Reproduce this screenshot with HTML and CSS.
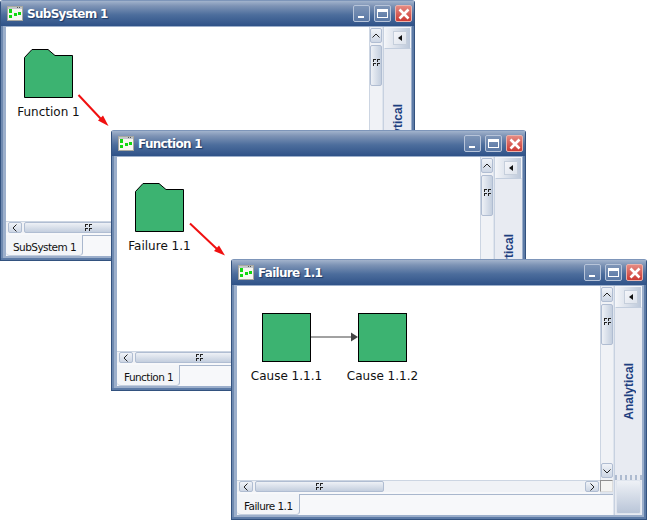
FILE: index.html
```html
<!DOCTYPE html>
<html lang="en">
<head>
<meta charset="utf-8">
<title>Nested diagrams</title>
<link rel="stylesheet" href="styles.css">
</head>
<body>
<svg width="0" height="0" class="defs" aria-hidden="true">
  <symbol id="app" viewBox="0 0 16 16">
    <rect x="0.5" y="0.5" width="15" height="14" fill="#f6f6f0" stroke="#a8a8a0"/>
    <rect x="1" y="1" width="14" height="2" fill="#c4c8cc"/>
    <rect x="10" y="1" width="1" height="1" fill="#555"/>
    <rect x="12" y="1" width="1" height="1" fill="#555"/>
    <rect x="2" y="3" width="3" height="4" fill="#10d810"/>
    <rect x="2" y="9" width="3" height="3" fill="#10d810"/>
    <rect x="7" y="7" width="3" height="3" fill="#10d810"/>
    <rect x="11" y="6" width="3" height="3" fill="#10d810"/>
  </symbol>
  <symbol id="grip" viewBox="0 0 7 7">
    <path d="M0 0h3v1H1v2H0zM4 0h3v1H5v2H4zM0 4h3v1H1v2H0zM4 4h3v1H5v2H4z" fill="#222"/>
  </symbol>
</svg>

<section class="window win-one">
  <header class="titlebar">
    <svg class="app-icon"><use href="#app"/></svg>
    <span class="title">SubSystem 1</span>
    <div class="controls">
      <button class="ctl"><span class="min-glyph"></span></button>
      <button class="ctl"><span class="max-glyph"></span></button>
      <button class="ctl close"><svg viewBox="0 0 12 12" width="12" height="12"><path d="M1.5 1.5l9 9M10.5 1.5l-9 9" stroke="#fff" stroke-width="2.6"/></svg></button>
    </div>
  </header>
  <div class="body">
    <div class="main">
      <div class="canvas">
        <div class="node node-a"><svg class="shape" viewBox="0 0 49 49"><path d="M.5 8.500L8 .5H24L31 6.500H48.500V48.500H.5Z" fill="#3cb371" stroke="#000"/></svg><span class="label">Function 1</span></div>
      </div>
      <div class="vscroll">
        <div class="sbtn"><svg viewBox="0 0 10 10" width="10" height="10"><path d="M1.500 6.500L5 3l3.500 3.500" fill="none" stroke="#222"/></svg></div>
        <div class="vthumb"><svg class="grip"><use href="#grip"/></svg></div>
      </div>
      <div class="hscroll">
        <div class="sbtn"><svg viewBox="0 0 10 10" width="10" height="10"><path d="M6.500 1.500L3 5l3.500 3.500" fill="none" stroke="#222"/></svg></div>
        <div class="hthumb"><svg class="grip"><use href="#grip"/></svg></div>
        <div class="htrack"></div>
        <div class="sbtn"><svg viewBox="0 0 10 10" width="10" height="10"><path d="M3.500 1.500L7 5 3.500 8.500" fill="none" stroke="#222"/></svg></div>
      </div>
      <div class="corner"></div>
      <div class="tabs"><span class="tab">SubSystem 1</span></div>
    </div>
    <aside class="side">
      <div class="side-head"><div class="side-btn"><svg viewBox="0 0 4 6" width="4" height="6"><path d="M4 0v6L0 3z" fill="#111"/></svg></div></div>
      <div class="side-mid"><span class="vtext">Analytical</span></div>
      <div class="dots"></div>
      <div class="side-foot"></div>
    </aside>
  </div>
</section>

<section class="window win-two">
  <header class="titlebar">
    <svg class="app-icon"><use href="#app"/></svg>
    <span class="title">Function 1</span>
    <div class="controls">
      <button class="ctl"><span class="min-glyph"></span></button>
      <button class="ctl"><span class="max-glyph"></span></button>
      <button class="ctl close"><svg viewBox="0 0 12 12" width="12" height="12"><path d="M1.5 1.5l9 9M10.5 1.5l-9 9" stroke="#fff" stroke-width="2.6"/></svg></button>
    </div>
  </header>
  <div class="body">
    <div class="main">
      <div class="canvas">
        <div class="node node-b"><svg class="shape" viewBox="0 0 49 49"><path d="M.5 8.500L8 .5H24L31 6.500H48.500V48.500H.5Z" fill="#3cb371" stroke="#000"/></svg><span class="label">Failure 1.1</span></div>
      </div>
      <div class="vscroll">
        <div class="sbtn"><svg viewBox="0 0 10 10" width="10" height="10"><path d="M1.500 6.500L5 3l3.500 3.500" fill="none" stroke="#222"/></svg></div>
        <div class="vthumb"><svg class="grip"><use href="#grip"/></svg></div>
      </div>
      <div class="hscroll">
        <div class="sbtn"><svg viewBox="0 0 10 10" width="10" height="10"><path d="M6.500 1.500L3 5l3.500 3.500" fill="none" stroke="#222"/></svg></div>
        <div class="hthumb"><svg class="grip"><use href="#grip"/></svg></div>
        <div class="htrack"></div>
        <div class="sbtn"><svg viewBox="0 0 10 10" width="10" height="10"><path d="M3.500 1.500L7 5 3.500 8.500" fill="none" stroke="#222"/></svg></div>
      </div>
      <div class="corner"></div>
      <div class="tabs"><span class="tab">Function 1</span></div>
    </div>
    <aside class="side">
      <div class="side-head"><div class="side-btn"><svg viewBox="0 0 4 6" width="4" height="6"><path d="M4 0v6L0 3z" fill="#111"/></svg></div></div>
      <div class="side-mid"><span class="vtext">Analytical</span></div>
      <div class="dots"></div>
      <div class="side-foot"></div>
    </aside>
  </div>
</section>

<section class="window win-three">
  <header class="titlebar">
    <svg class="app-icon"><use href="#app"/></svg>
    <span class="title">Failure 1.1</span>
    <div class="controls">
      <button class="ctl"><span class="min-glyph"></span></button>
      <button class="ctl"><span class="max-glyph"></span></button>
      <button class="ctl close"><svg viewBox="0 0 12 12" width="12" height="12"><path d="M1.5 1.5l9 9M10.5 1.5l-9 9" stroke="#fff" stroke-width="2.6"/></svg></button>
    </div>
  </header>
  <div class="body">
    <div class="main">
      <div class="canvas">
        <div class="node node-c"><div class="square"></div><span class="label">Cause 1.1.1</span></div>
        <svg class="link" width="47" height="12" viewBox="0 0 47 12"><path d="M0 6H40" stroke="#444"/><path d="M40 1.500L47 6 40 10.500Z" fill="#444"/></svg>
        <div class="node node-d"><div class="square"></div><span class="label">Cause 1.1.2</span></div>
      </div>
      <div class="vscroll">
        <div class="sbtn"><svg viewBox="0 0 10 10" width="10" height="10"><path d="M1.500 6.500L5 3l3.500 3.500" fill="none" stroke="#222"/></svg></div>
        <div class="vthumb"><svg class="grip"><use href="#grip"/></svg></div>
        <div class="vtrack"></div>
        <div class="sbtn"><svg viewBox="0 0 10 10" width="10" height="10"><path d="M1.500 3.500L5 7l3.500-3.500" fill="none" stroke="#222"/></svg></div>
      </div>
      <div class="hscroll">
        <div class="sbtn"><svg viewBox="0 0 10 10" width="10" height="10"><path d="M6.500 1.500L3 5l3.500 3.500" fill="none" stroke="#222"/></svg></div>
        <div class="hthumb"><svg class="grip"><use href="#grip"/></svg></div>
        <div class="htrack"></div>
        <div class="sbtn"><svg viewBox="0 0 10 10" width="10" height="10"><path d="M3.500 1.500L7 5 3.500 8.500" fill="none" stroke="#222"/></svg></div>
      </div>
      <div class="corner"></div>
      <div class="tabs"><span class="tab">Failure 1.1</span></div>
    </div>
    <aside class="side">
      <div class="side-head"><div class="side-btn"><svg viewBox="0 0 4 6" width="4" height="6"><path d="M4 0v6L0 3z" fill="#111"/></svg></div></div>
      <div class="side-mid"><span class="vtext">Analytical</span></div>
      <div class="dots"></div>
      <div class="side-foot"></div>
    </aside>
  </div>
</section>

<svg class="arrows" width="647" height="521" viewBox="0 0 647 521" aria-hidden="true">
  <path d="M78.500 95L101 119" stroke="#f01010" stroke-width="2"/>
  <path d="M108.500 126L98 120.500 103 115.500Z" fill="#f01010"/>
  <path d="M190 223.500L217 249" stroke="#f01010" stroke-width="2"/>
  <path d="M225 255.500L214 251 219 245.500Z" fill="#f01010"/>
</svg>
</body>
</html>
```
FILE: styles.css
```css
* { box-sizing: border-box; }
html, body { margin: 0; padding: 0; }
body {
  width: 647px;
  height: 521px;
  position: relative;
  overflow: hidden;
  background: #fff;
  font-family: "Liberation Sans", Arial, sans-serif;
}
.defs { position: absolute; }
.window {
  position: absolute;
  width: 415px;
  height: 261px;
  display: flex;
  flex-direction: column;
  padding: 0 3px 4px 5px;
  background: #9cafcb;
  border: 1px solid #33527f;
  border-top-color: #7d95b9;
  border-radius: 3px 3px 0 0;
  box-shadow: inset 0 -2px 0 #5d7ba6, inset -2px 0 0 #5d7ba6, inset 2px 0 0 #6f8ab0;
}
.win-one { left: 0; top: 0; }
.win-two { left: 111px; top: 130px; }
.win-three { left: 231px; top: 259px; width: 416px; padding-right: 4px; }
.win-three .titlebar { margin-right: -4px; padding-right: 3px; }

.titlebar {
  flex: none;
  height: 25px;
  margin: 0 -3px 0 -5px;
  padding: 0 2px 0 6px;
  display: flex;
  align-items: center;
  background: linear-gradient(#a2b3cc 0, #7d93b5 5px, #4c6d9c 14px, #2f5288 25px);
}
.app-icon { width: 16px; height: 16px; flex: none; }
.title {
  margin-left: 4px;
  flex: 1;
  color: #fff;
  font: bold 12px "DejaVu Sans", sans-serif;
  letter-spacing: -0.7px;
  text-shadow: 1px 1px 1px #1c3763;
}
.controls { display: flex; gap: 4px; }
.ctl {
  width: 17px;
  height: 17px;
  padding: 0;
  display: flex;
  align-items: center;
  justify-content: center;
  border: 1px solid #b7c4d9;
  border-radius: 2px;
  background: linear-gradient(#7e95b7, #5a78a5);
}
.ctl.close {
  border-color: #eab2ac;
  background: linear-gradient(#e58a82, #cc3a34);
}
.min-glyph { width: 6px; height: 2px; background: #fff; margin-top: 7px; margin-right: 2px; }
.max-glyph { width: 11px; height: 9px; border: 1px solid #fff; border-top-width: 3px; }

.body {
  flex: 1;
  min-height: 0;
  display: flex;
  gap: 1px;
  margin-top: 1px;
  background: #dfe5ee;
}
.main {
  flex: 1;
  min-width: 0;
  display: grid;
  grid-template-columns: 1fr 13px;
  grid-template-rows: 1fr 14px 21px;
  background: #dfe5ee;
}
.canvas {
  position: relative;
  background: #fff;
  overflow: hidden;
  grid-column: 1;
  grid-row: 1;
}
.node {
  position: absolute;
  display: flex;
  flex-direction: column;
  align-items: center;
  width: 99px;
}
.node-a { left: -7px; top: 22px; }
.node-b { left: -7px; top: 26px; }
.node-c { left: 0; top: 27px; }
.node-d { left: 96px; top: 27px; }
.shape { width: 49px; height: 49px; display: block; }
.square {
  width: 49px;
  height: 49px;
  background: #3cb371;
  border: 1px solid #000;
}
.label {
  margin-top: 7px;
  font: 12px "DejaVu Sans", sans-serif;
  line-height: 14px;
  color: #111;
  white-space: nowrap;
}
.link { position: absolute; left: 74px; top: 45px; }

.vscroll {
  grid-column: 2;
  grid-row: 1;
  display: flex;
  flex-direction: column;
  gap: 2px;
  padding: 1px 1px 2px 0;
  background: #f0f2f6;
  border-left: 1px solid #ccd5e2;
  min-height: 0;
  overflow: hidden;
}
.sbtn {
  flex: none;
  width: 12px;
  height: 15px;
  display: flex;
  align-items: center;
  justify-content: center;
  background: linear-gradient(#f0f3f8, #cdd6e4);
  border: 1px solid #b0bdd2;
  border-radius: 2px;
}
.vthumb {
  flex: none;
  width: 12px;
  height: 41px;
  display: flex;
  align-items: center;
  justify-content: center;
  padding-bottom: 6px;
  background: linear-gradient(90deg, #eef1f6, #c3cede);
  border: 1px solid #b0bdd2;
  border-radius: 2px;
}
.vtrack { flex: 1; }
.grip { width: 7px; height: 7px; }
.hscroll {
  grid-column: 1;
  grid-row: 2;
  display: flex;
  gap: 2px;
  padding: 0 1px 0 2px;
  background: #f0f2f6;
  border-top: 1px solid #ccd5e2;
  border-bottom: 2px solid #f7f8fa;
  min-width: 0;
}
.hscroll .sbtn { height: 11px; width: 14px; }
.hthumb {
  flex: none;
  width: 129px;
  height: 11px;
  display: flex;
  align-items: center;
  justify-content: center;
  background: linear-gradient(#eef1f6, #c3cede);
  border: 1px solid #b0bdd2;
  border-radius: 2px;
}
.htrack { flex: 1; }
.corner {
  grid-column: 2;
  grid-row: 2;
  height: 12px;
  background: #f4f4f2;
  border: 1px solid #8f8f8f;
  border-right-color: #ddd;
  border-bottom-color: #ddd;
}
.tabs {
  grid-column: 1 / 3;
  grid-row: 3;
  display: flex;
  background: #f7f8fa;
  border-top: 1px solid #a9b7cd;
  height: 21px;
}
.tab {
  height: 21px;
  margin-top: -1px;
  padding: 5px 6px 0 7px;
  font: 10.5px "DejaVu Sans", sans-serif;
  line-height: 14px;
  letter-spacing: -0.55px;
  color: #111;
  background: #f3f5f8;
  border-right: 1px solid #a9b7cd;
  border-bottom: 1px solid #c3cede;
  border-radius: 0 0 4px 4px;
  white-space: nowrap;
}
.side {
  flex: none;
  width: 28px;
  display: flex;
  flex-direction: column;
  background: #e8ebf2;
  border-left: 1px solid #c7d1e0;
}
.side-head {
  flex: none;
  height: 22px;
  display: flex;
  align-items: center;
  justify-content: flex-end;
  padding-right: 3px;
  background: linear-gradient(90deg, #f2f4f8, #bcc8da);
  border: 1px solid #f4f6fa;
  border-bottom-color: #c3cede;
}
.side-btn {
  width: 14px;
  height: 14px;
  display: flex;
  align-items: center;
  justify-content: center;
  background: linear-gradient(135deg, #f5f6fa, #dde3ec);
  border: 1px solid #c6cfdc;
}
.side-mid {
  flex: 1;
  min-height: 0;
  display: flex;
  align-items: flex-start;
  justify-content: center;
  padding-top: 55px;
  overflow: hidden;
}
.vtext {
  writing-mode: vertical-rl;
  transform: rotate(180deg);
  font: bold 12px "Liberation Sans", sans-serif;
  color: #1d3f80;
}
.dots {
  flex: none;
  height: 5px;
  background: repeating-linear-gradient(90deg, #aebbd0 0 2px, #e8ebf2 2px 5px);
}
.side-foot {
  flex: none;
  height: 34px;
  margin: 0 1px 1px;
  background: linear-gradient(#eef1f6, #b9c5d8);
  border: 1px solid #dfe5ee;
  border-radius: 2px;
}
.arrows {
  position: absolute;
  left: 0;
  top: 0;
  pointer-events: none;
}
```
